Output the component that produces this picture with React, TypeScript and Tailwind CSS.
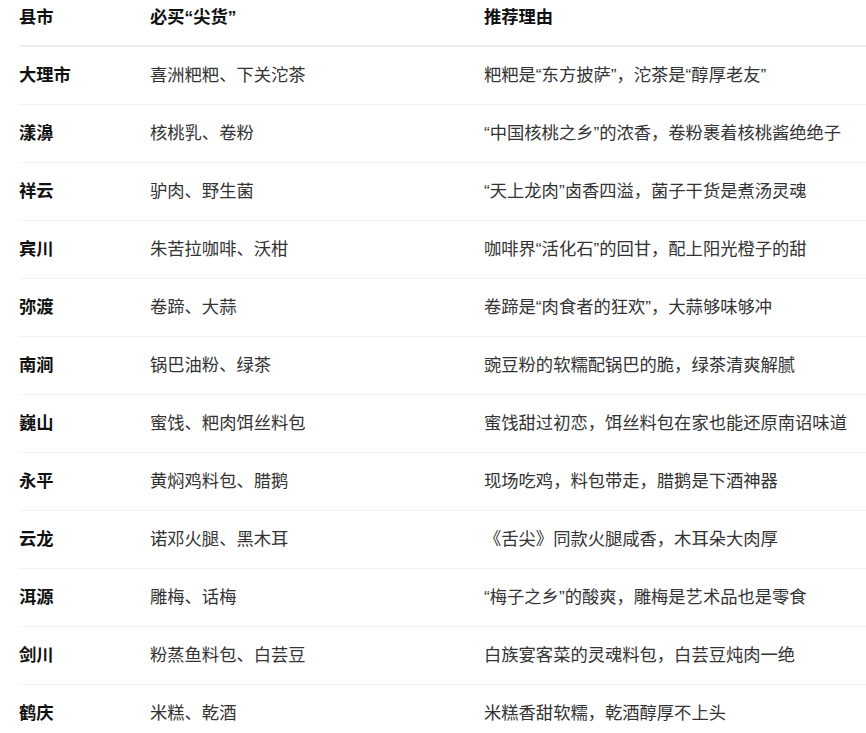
import React from 'react';

const rows = [
  { city: '大理市', goods: '喜洲粑粑、下关沱茶', reason: '粑粑是“东方披萨”，沱茶是“醇厚老友”' },
  { city: '漾濞', goods: '核桃乳、卷粉', reason: '“中国核桃之乡”的浓香，卷粉裹着核桃酱绝绝子' },
  { city: '祥云', goods: '驴肉、野生菌', reason: '“天上龙肉”卤香四溢，菌子干货是煮汤灵魂' },
  { city: '宾川', goods: '朱苦拉咖啡、沃柑', reason: '咖啡界“活化石”的回甘，配上阳光橙子的甜' },
  { city: '弥渡', goods: '卷蹄、大蒜', reason: '卷蹄是“肉食者的狂欢”，大蒜够味够冲' },
  { city: '南涧', goods: '锅巴油粉、绿茶', reason: '豌豆粉的软糯配锅巴的脆，绿茶清爽解腻' },
  { city: '巍山', goods: '蜜饯、粑肉饵丝料包', reason: '蜜饯甜过初恋，饵丝料包在家也能还原南诏味道' },
  { city: '永平', goods: '黄焖鸡料包、腊鹅', reason: '现场吃鸡，料包带走，腊鹅是下酒神器' },
  { city: '云龙', goods: '诺邓火腿、黑木耳', reason: '《舌尖》同款火腿咸香，木耳朵大肉厚' },
  { city: '洱源', goods: '雕梅、话梅', reason: '“梅子之乡”的酸爽，雕梅是艺术品也是零食' },
  { city: '剑川', goods: '粉蒸鱼料包、白芸豆', reason: '白族宴客菜的灵魂料包，白芸豆炖肉一绝' },
  { city: '鹤庆', goods: '米糕、乾酒', reason: '米糕香甜软糯，乾酒醇厚不上头' },
];

const App = () => {
  return (
    <div className="w-[866px] h-[733px] overflow-hidden bg-white pl-[19px] font-['Liberation_Sans','Noto_Sans_CJK_SC',sans-serif] text-[17.3px]">
      <div className="w-[900px]">
        {/* header */}
        <div className="grid grid-cols-[131px_334px_1fr] pt-[5px] pb-4 border-b-2 border-[#efefef] font-bold text-[#111] leading-[24px]">
          <div>县市</div>
          <div>必买“尖货”</div>
          <div>推荐理由</div>
        </div>
        {rows.map((r) => (
          <div key={r.city} className="grid grid-cols-[131px_334px_1fr] py-4 border-b border-[#f2f2f2] leading-[25px]">
            <div className="font-bold text-[#111]">{r.city}</div>
            <div className="text-[#333]">{r.goods}</div>
            <div className="text-[#333]">{r.reason}</div>
          </div>
        ))}
      </div>
    </div>
  );
};

export default App;
